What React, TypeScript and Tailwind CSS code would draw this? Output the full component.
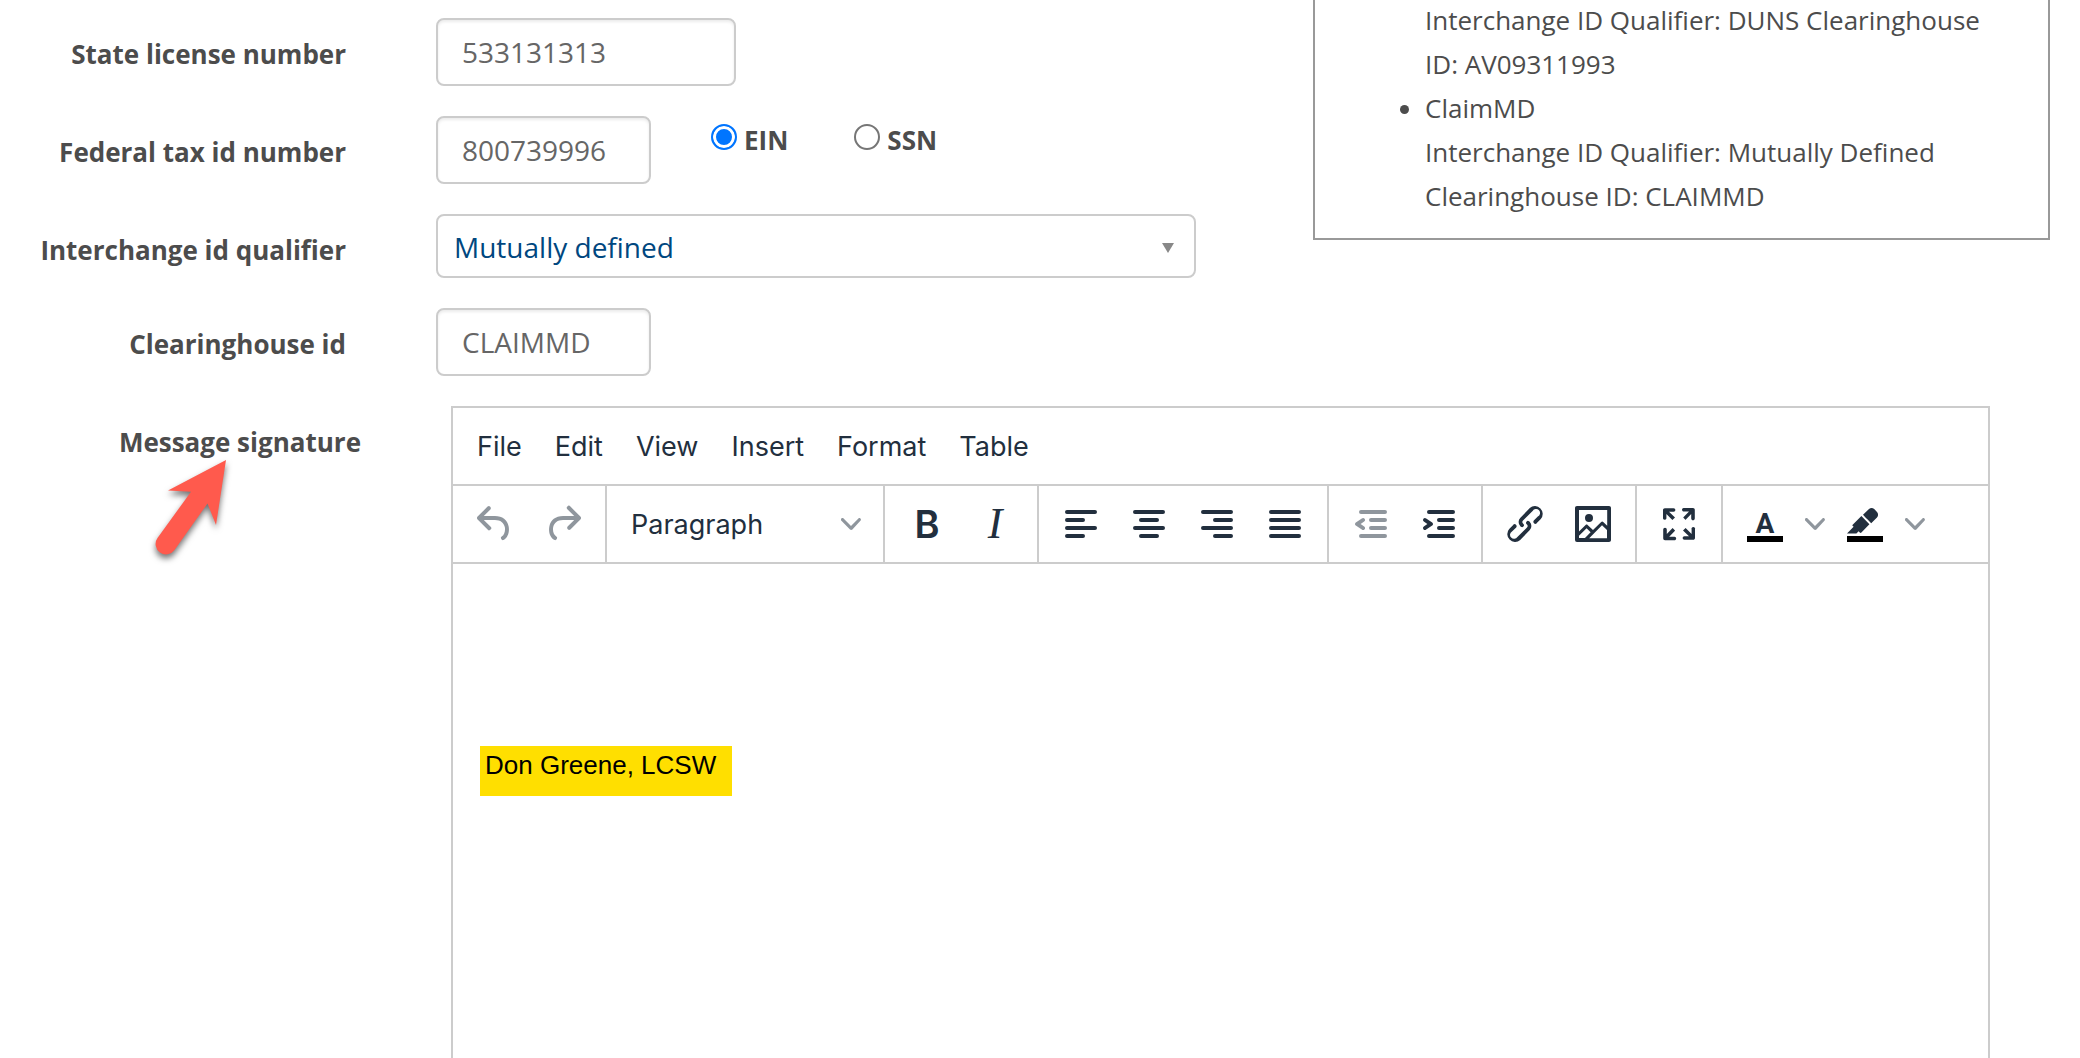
import { useState } from "react";
import type { ReactNode } from "react";

const MENUS = ["File", "Edit", "View", "Insert", "Format", "Table"];

const ICONS = {
  undo: "M6.4 8H12c3.7 0 6.2 2 6.8 5.1.6 2.7-.4 5.6-2.3 6.8a1 1 0 01-1-1.8c1.1-.6 1.8-2.7 1.4-4.6-.5-2.1-2.1-3.5-4.9-3.5H6.4l3.3 3.3a1 1 0 11-1.4 1.4l-5-5a1 1 0 010-1.4l5-5a1 1 0 011.4 1.4L6.4 8z",
  redo: "M17.6 10H12c-2.8 0-4.4 1.4-4.9 3.5-.4 2 .3 4 1.4 4.6a1 1 0 11-1 1.8c-2-1.2-2.9-4.1-2.3-6.8.6-3 3-5.1 6.8-5.1h5.6l-3.3-3.3a1 1 0 111.4-1.4l5 5a1 1 0 010 1.4l-5 5a1 1 0 01-1.4-1.4l3.3-3.3z",
  alignLeft: "M5 5h14a1 1 0 010 2H5a1 1 0 110-2zm0 4h8a1 1 0 010 2H5a1 1 0 110-2zm0 4h14a1 1 0 010 2H5a1 1 0 010-2zm0 4h8a1 1 0 010 2H5a1 1 0 010-2z",
  alignCenter: "M5 5h14a1 1 0 010 2H5a1 1 0 110-2zm3 4h8a1 1 0 010 2H8a1 1 0 110-2zm-3 4h14a1 1 0 010 2H5a1 1 0 010-2zm3 4h8a1 1 0 010 2H8a1 1 0 010-2z",
  alignRight: "M5 5h14a1 1 0 010 2H5a1 1 0 110-2zm6 4h8a1 1 0 010 2h-8a1 1 0 010-2zm-6 4h14a1 1 0 010 2H5a1 1 0 010-2zm6 4h8a1 1 0 010 2h-8a1 1 0 010-2z",
  justify: "M5 5h14a1 1 0 010 2H5a1 1 0 110-2zm0 4h14a1 1 0 010 2H5a1 1 0 110-2zm0 4h14a1 1 0 010 2H5a1 1 0 010-2zm0 4h14a1 1 0 010 2H5a1 1 0 010-2z",
  outdent: "M7 5h12a1 1 0 010 2H7a1 1 0 110-2zm5 4h7a1 1 0 010 2h-7a1 1 0 010-2zm0 4h7a1 1 0 010 2h-7a1 1 0 010-2zm-5 4h12a1 1 0 010 2H7a1 1 0 010-2zm1.6-3.8a1 1 0 01-1.2 1.6l-3-2a1 1 0 010-1.6l3-2a1 1 0 011.2 1.6L6.8 12l1.8 1.2z",
  indent: "M7 5h12a1 1 0 010 2H7a1 1 0 110-2zm5 4h7a1 1 0 010 2h-7a1 1 0 010-2zm0 4h7a1 1 0 010 2h-7a1 1 0 010-2zm-5 4h12a1 1 0 010 2H7a1 1 0 010-2zm-2.6-3.8L6.2 12l-1.8-1.2a1 1 0 011.2-1.6l3 2a1 1 0 010 1.6l-3 2a1 1 0 11-1.2-1.6z",
  link: "M6.2 12.3a1 1 0 011.4 1.4l-2.1 2a2 2 0 102.7 2.8l4.8-4.8a1 1 0 000-1.4 1 1 0 111.4-1.3 2.9 2.9 0 010 4L9.6 20a3.9 3.9 0 01-5.5-5.5l2-2zm11.6-.6a1 1 0 01-1.4-1.4l2-2a2 2 0 10-2.6-2.8L11 10.3a1 1 0 000 1.4A1 1 0 119.6 13a2.9 2.9 0 010-4L14.4 4a3.9 3.9 0 015.5 5.5l-2 2z",
  image: "M5 15.7l3.3-3.2c.3-.3.7-.3 1 0L12 15l4.1-4c.3-.4.8-.4 1 0l2 1.9V5H5v10.7zM5 18V19h3l2.8-2.9-2-2L5 17.9zm14-3l-2.5-2.4-6.4 6.5H19v-4zM4 3h16c.6 0 1 .4 1 1v16c0 .6-.4 1-1 1H4a1 1 0 01-1-1V4c0-.6.4-1 1-1zm6 8a2 2 0 100-4 2 2 0 000 4z",
  fullscreen: "M15.3 10l-1.2-1.3 2.9-3h-2.3a.9.9 0 110-1.7H19c.5 0 .9.4.9.9v4.4a.9.9 0 11-1.8 0V7l-2.9 3zm0 4l3 3v-2.3a.9.9 0 111.7 0V19c0 .5-.4.9-.9.9h-4.4a.9.9 0 110-1.8H17l-3-2.9 1.3-1.2zM10 15.4l-2.9 3h2.3a.9.9 0 110 1.7H5a.9.9 0 01-.9-.9v-4.4a.9.9 0 111.8 0V17l2.9-3 1.2 1.3zM8.7 10L5.7 7v2.3a.9.9 0 01-1.7 0V5c0-.5.4-.9.9-.9h4.4a.9.9 0 010 1.8H7l3 2.9-1.3 1.2z",
  highlight: "M7.7 16.7H3l3.3-3.3-.7-.8L10.2 8l4 4.1-4 4.2c-.2.2-.6.2-.8 0l-.6-.7-1.1 1.1zm5-7.5L11 7.4l3-2.9a2 2 0 012.6 0L18 6c.7.7.7 2 0 2.7l-2.9 2.9-1.8-1.8-.5-.6z",
};

type IconName = keyof typeof ICONS;

function Icon({ name }: { name: IconName }) {
  return (
    <svg viewBox="0 0 24 24" className="h-12 w-12" fill="currentColor" fillRule="evenodd" aria-hidden="true">
      <path d={ICONS[name]} />
    </svg>
  );
}

function Chevron() {
  return (
    <svg viewBox="0 0 10 10" className="h-5 w-5 opacity-50" fill="currentColor" aria-hidden="true">
      <path d="M8.7 2.2c.3-.3.8-.3 1 0 .4.4.4.9 0 1.2L5.7 7.8c-.3.3-.9.3-1.2 0L.2 3.4a.8.8 0 010-1.2c.3-.3.8-.3 1.1 0L5 6l3.7-3.8z" />
    </svg>
  );
}

function ToolButton({ label, disabled, children }: { label: string; disabled?: boolean; children: ReactNode }) {
  return (
    <button
      type="button"
      aria-label={label}
      disabled={disabled}
      className="flex h-[68px] w-[68px] items-center justify-center disabled:opacity-50"
    >
      {children}
    </button>
  );
}

function ToolGroup({ children }: { children: ReactNode }) {
  return <div className="flex items-center border-r-2 border-[#ccc] px-2 last:border-r-0">{children}</div>;
}

// Button with a colour bar under the glyph and its own drop-down arrow
function ColorButton({ label, children }: { label: string; children: ReactNode }) {
  return (
    <div className="flex items-center">
      <ToolButton label={label}>
        <span className="relative flex h-12 w-12 items-center justify-center">
          {children}
          <span className="absolute bottom-1.5 left-1.5 h-1.5 w-9 bg-black" />
        </span>
      </ToolButton>
      <button type="button" aria-label={`${label} menu`} className="flex h-[68px] w-8 items-center justify-center">
        <Chevron />
      </button>
    </div>
  );
}

function Row({ label, htmlFor, children }: { label: string; htmlFor: string; children: ReactNode }) {
  return (
    <div className="flex items-start gap-[90px]">
      <label htmlFor={htmlFor} className="w-[346px] shrink-0 pt-[18px] text-right text-[26px] leading-9 font-bold">
        {label}
      </label>
      <div className="flex min-w-0 flex-1 items-start">{children}</div>
    </div>
  );
}

const inputClass =
  "h-[68px] rounded-lg border-2 border-[#ccc] px-6 text-[28px] text-[#666] shadow-[inset_0_2px_3px_rgba(0,0,0,0.08)] outline-none";

const radioClass =
  "mt-0.5 h-[26px] w-[26px] appearance-none rounded-full border-2 border-[#767676] bg-white checked:border-[#0075ff] checked:bg-[#0075ff] checked:shadow-[inset_0_0_0_3px_white]";

function Editor() {
  return (
    <div className="flex min-w-0 flex-1 flex-col border-2 border-b-0 border-[#ccc] font-[Inter,sans-serif] text-[#222f3e]">
      <div className="flex h-[78px] items-center gap-px border-b-2 border-[#ccc] px-2 pt-0.5" role="menubar">
        {MENUS.map((menu) => (
          <button key={menu} type="button" role="menuitem" className="px-4 text-[27px] leading-9">
            {menu}
          </button>
        ))}
      </div>

      <div className="flex h-[78px] border-b-2 border-[#ccc]" role="toolbar">
        <ToolGroup>
          <ToolButton label="Undo" disabled><Icon name="undo" /></ToolButton>
          <ToolButton label="Redo" disabled><Icon name="redo" /></ToolButton>
        </ToolGroup>
        <ToolGroup>
          <div className="relative">
            <select aria-label="Block format" className="h-[68px] w-[260px] appearance-none pt-0.5 pl-4 text-[27px] outline-none">
              <option>Paragraph</option>
              <option>Heading 1</option>
              <option>Heading 2</option>
            </select>
            <span className="pointer-events-none absolute inset-y-0 right-3.5 flex items-center">
              <Chevron />
            </span>
          </div>
        </ToolGroup>
        <ToolGroup>
          <ToolButton label="Bold"><span className="text-[38px] leading-none font-semibold">B</span></ToolButton>
          <ToolButton label="Italic">
            <span className="font-['Liberation_Serif',serif] text-[44px] leading-none italic">I</span>
          </ToolButton>
        </ToolGroup>
        <ToolGroup>
          <ToolButton label="Align left"><Icon name="alignLeft" /></ToolButton>
          <ToolButton label="Align center"><Icon name="alignCenter" /></ToolButton>
          <ToolButton label="Align right"><Icon name="alignRight" /></ToolButton>
          <ToolButton label="Justify"><Icon name="justify" /></ToolButton>
        </ToolGroup>
        <ToolGroup>
          <ToolButton label="Decrease indent" disabled><Icon name="outdent" /></ToolButton>
          <ToolButton label="Increase indent"><Icon name="indent" /></ToolButton>
        </ToolGroup>
        <ToolGroup>
          <ToolButton label="Link"><Icon name="link" /></ToolButton>
          <ToolButton label="Image"><Icon name="image" /></ToolButton>
        </ToolGroup>
        <ToolGroup>
          <ToolButton label="Fullscreen"><Icon name="fullscreen" /></ToolButton>
        </ToolGroup>
        <ToolGroup>
          <ColorButton label="Text color">
            <span className="font-[Roboto,sans-serif] text-[28px] leading-none font-bold">A</span>
          </ColorButton>
          <ColorButton label="Background color"><Icon name="highlight" /></ColorButton>
        </ToolGroup>
      </div>

      <div
        id="signature"
        role="textbox"
        aria-labelledby="signature-label"
        contentEditable
        suppressContentEditableWarning
        spellCheck={false}
        className="flex-1 px-[27px] pt-[182px] font-['Liberation_Sans',Arial,sans-serif] text-[26px] text-black outline-none"
      >
        <p className="h-[50px] w-[252px] bg-[#ffdf00] px-[5px] leading-[38px]">Don Greene, LCSW</p>
      </div>
    </div>
  );
}

export default function App() {
  const [taxIdType, setTaxIdType] = useState("EIN");

  return (
    <main className="flex h-screen flex-col gap-[30px] overflow-hidden bg-white font-['Open_Sans',sans-serif] text-[#4c4c4c]">
      <div className="flex items-start">
        <form className="flex min-w-0 flex-1 flex-col gap-[30px] pt-[18px] pr-[117px]">
          <Row label="State license number" htmlFor="license">
            <input id="license" defaultValue="533131313" className={`${inputClass} w-[300px]`} />
          </Row>

          <Row label="Federal tax id number" htmlFor="tax-id">
            <input id="tax-id" defaultValue="800739996" className={`${inputClass} w-[215px]`} />
            <div className="ml-[60px] flex gap-[66px] pt-1.5 text-[26px] leading-9 font-bold">
              {["EIN", "SSN"].map((type) => (
                <label key={type} className="flex items-start gap-[7px]">
                  <input
                    type="radio"
                    name="tax-id-type"
                    value={type}
                    checked={taxIdType === type}
                    onChange={() => setTaxIdType(type)}
                    className={radioClass}
                  />
                  {type}
                </label>
              ))}
            </div>
          </Row>

          <Row label="Interchange id qualifier" htmlFor="qualifier">
            <div className="relative flex-1">
              <select
                id="qualifier"
                className="h-16 w-full appearance-none rounded-lg border-2 border-[#ccc] bg-white px-4 pt-0.5 text-[28px] text-[#00477f] outline-none"
              >
                <option>Mutually defined</option>
                <option>DUNS</option>
              </select>
              <svg
                viewBox="0 0 12 10"
                className="pointer-events-none absolute top-[29px] right-[22px] h-2.5 w-3"
                fill="#888"
                aria-hidden="true"
              >
                <path d="M0 0h12L6 10z" />
              </svg>
            </div>
          </Row>

          <Row label="Clearinghouse id" htmlFor="clearinghouse">
            <input id="clearinghouse" defaultValue="CLAIMMD" className={`${inputClass} w-[215px]`} />
          </Row>
        </form>

        <aside className="mr-[30px] w-[737px] border-2 border-t-0 border-[#999] pb-5">
          <ul className="-mt-0.5 list-disc pr-12 pl-[110px] text-[26px] leading-[44px]">
            <li className="list-none">
              Interchange ID Qualifier: DUNS Clearinghouse
              <br />
              ID: AV09311993
            </li>
            <li>
              ClaimMD
              <br />
              Interchange ID Qualifier: Mutually Defined
              <br />
              Clearinghouse ID: CLAIMMD
            </li>
          </ul>
        </aside>
      </div>

      <div className="flex flex-1 gap-[90px] pr-[90px]">
        <div className="relative w-[361px] shrink-0 pt-[18px] text-right text-[26px] leading-9 font-bold">
          <label id="signature-label" htmlFor="signature">Message signature</label>
          {/* Pointer arrow */}
          <svg
            viewBox="0 0 100 120"
            className="absolute top-[50px] left-[140px] h-[120px] w-[100px] drop-shadow-[0_4px_3px_rgba(0,0,0,0.55)]"
            fill="#ff5a4d"
            aria-hidden="true"
          >
            <path d="M86 4 L28 34.5 L51 35.7 L17.5 82 A10 10 0 0 0 34.5 94 L67.500 47.500 L76 69 Z" />
          </svg>
        </div>
        <Editor />
      </div>
    </main>
  );
}
